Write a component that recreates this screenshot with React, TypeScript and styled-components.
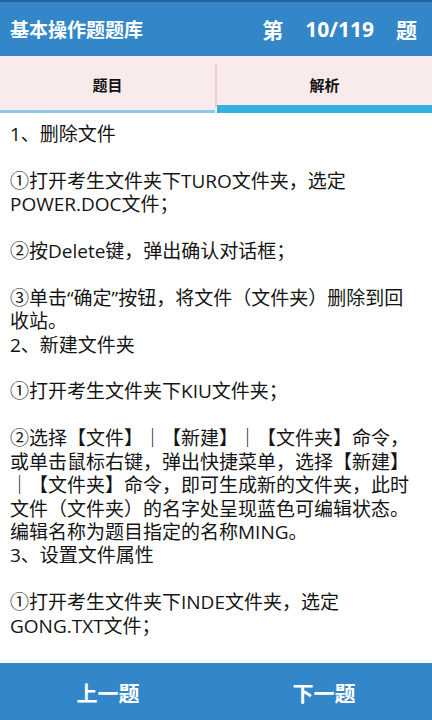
import React from "react";
import styled, { createGlobalStyle } from "styled-components";

const Global = createGlobalStyle`
  html, body { margin: 0; padding: 0; background: #ffffff; }
  body { font-family: "Open Sans", "Noto Sans CJK SC", sans-serif; }
  * { box-sizing: border-box; }
`;

const Screen = styled.div`
  width: 432px;
  height: 720px;
  display: flex;
  flex-direction: column;
  overflow: hidden;
  background: #ffffff;
`;

const Header = styled.header`
  height: 56px;
  flex: none;
  background: #3387c9;
  border-top: 2px solid #21629a;
  display: flex;
  align-items: center;
  justify-content: space-between;
  padding: 0 15px 0 10px;
  color: #ffffff;
  font-family: "Open Sans", "Noto Sans CJK SC", sans-serif;
  font-weight: 700;
`;

const Title = styled.div`
  font-size: 19px;
`;

const Counter = styled.div`
  display: flex;
  align-items: center;
  gap: 22px;
  font-size: 21px;
`;

const Tabs = styled.nav`
  height: 57px;
  flex: none;
  background: #f9ebeb;
  display: flex;
`;

const Tab = styled.div<{ $active?: boolean }>`
  flex: 1;
  display: flex;
  align-items: center;
  justify-content: center;
  padding-bottom: 1px;
  font-size: 15px;
  font-weight: 700;
  color: #111111;
  box-shadow: ${(p) =>
    p.$active
      ? "inset 0 -8px 0 #34afde, inset 0 -1px 0 #f4f8fb"
      : "inset 0 -3px 0 #8cc8e9, inset 0 -1px 0 #f4f8fb"};
`;

const Divider = styled.div`
  width: 2px;
  flex: none;
  margin: 8px 0 6px;
  background: #e3d2d2;
`;

const Content = styled.main`
  flex: 1;
  overflow: hidden;
  padding: 10px 2px 0 10px;
  font-family: "Open Sans", "Noto Sans CJK SC", sans-serif;
  font-size: 19px;
  line-height: 23.4px;
  color: #141414;
  white-space: pre;
`;

const Footer = styled.footer`
  height: 57px;
  flex: none;
  background: #3387c9;
  display: flex;
`;

const NavButton = styled.div`
  flex: 1;
  display: flex;
  align-items: center;
  justify-content: center;
  color: #ffffff;
  font-weight: 700;
  font-size: 21px;
  font-family: "Open Sans", "Noto Sans CJK SC", sans-serif;
`;

const text = [
  "1、删除文件",
  "",
  "①打开考生文件夹下TURO文件夹，选定",
  "POWER.DOC文件；",
  "",
  "②按Delete键，弹出确认对话框；",
  "",
  "③单击“确定”按钮，将文件（文件夹）删除到回",
  "收站。",
  "2、新建文件夹",
  "",
  "①打开考生文件夹下KIU文件夹；",
  "",
  "②选择【文件】｜【新建】｜【文件夹】命令，",
  "或单击鼠标右键，弹出快捷菜单，选择【新建】",
  "｜【文件夹】命令，即可生成新的文件夹，此时",
  "文件（文件夹）的名字处呈现蓝色可编辑状态。",
  "编辑名称为题目指定的名称MING。",
  "3、设置文件属性",
  "",
  "①打开考生文件夹下INDE文件夹，选定",
  "GONG.TXT文件；",
].join("\n");

export default function App() {
  return (
    <>
      <Global />
      <Screen>
        <Header>
          <Title>基本操作题题库</Title>
          <Counter>
            <span>第</span>
            <span>10/119</span>
            <span>题</span>
          </Counter>
        </Header>
        <Tabs>
          <Tab>题目</Tab>
          <Divider />
          <Tab $active>解析</Tab>
        </Tabs>
        <Content>{text}</Content>
        <Footer>
          <NavButton>上一题</NavButton>
          <NavButton>下一题</NavButton>
        </Footer>
      </Screen>
    </>
  );
}
